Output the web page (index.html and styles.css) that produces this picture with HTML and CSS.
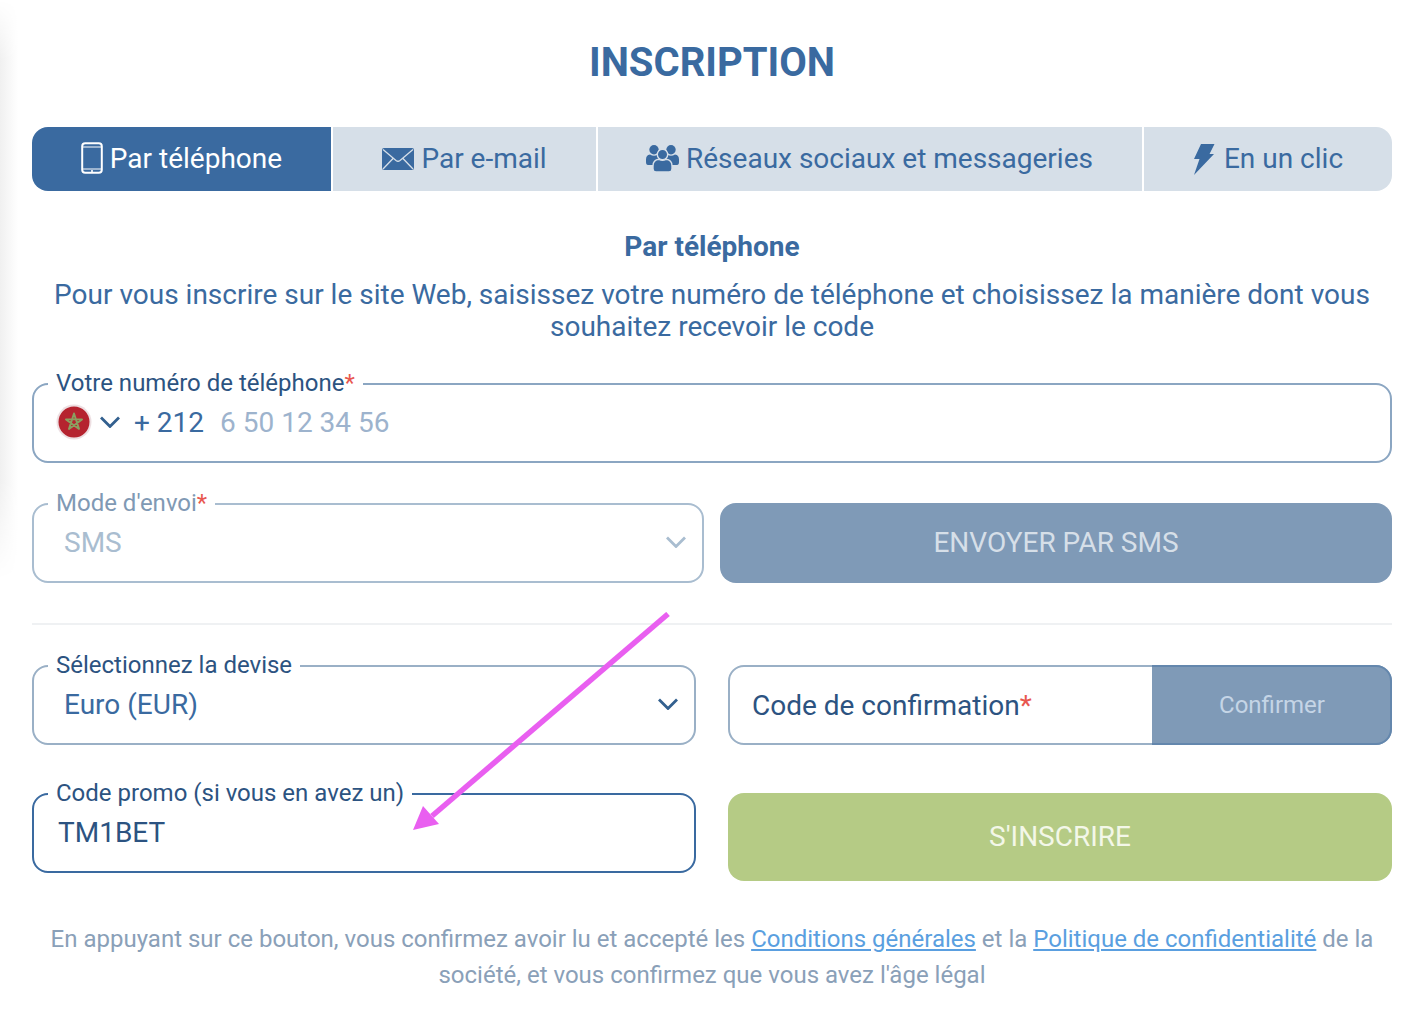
FILE: index.html
```html
<!DOCTYPE html>
<html lang="fr">
<head>
<meta charset="utf-8">
<title>Inscription</title>
<link rel="stylesheet" href="styles.css">
</head>
<body>
<div class="edge-shadow"></div>
<main class="page">
  <h1 class="title">INSCRIPTION</h1>
  <nav class="tabs">
    <a class="tab tab-phone active">
      <svg class="ico" width="22" height="32" viewBox="0 0 22 32"><rect x="1.2" y="1.2" width="19.6" height="29.6" rx="3" fill="none" stroke="currentColor" stroke-width="2"/><path d="M1 5h20M1 27h20" stroke="currentColor" stroke-width="1"/><circle cx="11" cy="29" r="1.1" fill="currentColor"/></svg>
      Par téléphone
    </a>
    <a class="tab tab-mail">
      <svg class="ico ico-mail" width="32" height="22" viewBox="0 0 32 22"><rect width="32" height="22" rx="2" fill="currentColor"/><path d="M1 1.500l13 11q2 1.500 4 0l13-11M1 21l10.500-11M31 21L20.500 10" fill="none" stroke="#d6dfe8" stroke-width="1.300"/></svg>
      Par e-mail
    </a>
    <a class="tab tab-social">
      <svg class="ico ico-social" width="33" height="27" viewBox="0 0 33 27"><g fill="currentColor"><circle cx="8" cy="4.800" r="4.700"/><circle cx="25" cy="4.800" r="4.700"/><path d="M0 17v-2.500q0-4.500 4-5 4 2.500 8 0 2.500.3 4 2L8 20H2q-2 0-2-3zM33 17v-2.500q0-4.500-4-5-4 2.500-8 0-2.500.3-4 2l8 8.500h6q2 0 2-3z"/><g stroke="#d6dfe8" stroke-width="1.400"><circle cx="16.500" cy="9.500" r="5.200"/><path d="M7 24v-3q0-6 6-6.700 3.500 2 7 0 6 .7 6 6.700v3q0 3-3 3H10q-3 0-3-3z"/></g></g></svg>
      Réseaux sociaux et messageries
    </a>
    <a class="tab tab-click">
      <svg class="ico ico-bolt" width="22" height="31" viewBox="-1 0 22 31"><path fill="currentColor" d="M7 0h13.500l-5 10h4.500L0 31l5.500-16H0z"/></svg>
      En un clic
    </a>
  </nav>

  <h2 class="subtitle">Par téléphone</h2>
  <p class="intro">Pour vous inscrire sur le site Web, saisissez votre numéro de téléphone et choisissez la manière dont vous souhaitez recevoir le code</p>

  <div class="field field-phone">
    <span class="field-label">Votre numéro de téléphone<em>*</em></span>
    <svg class="flag" width="36" height="36" viewBox="0 0 36 36"><circle cx="18" cy="18" r="17.500" fill="#eddfe2"/><circle cx="18" cy="18" r="15.500" fill="#b5232f"/><path d="M18 9.500l5 15.400-13-9.500h16l-13 9.500z" fill="none" stroke="#8aa060" stroke-width="1.900" stroke-linejoin="round"/></svg>
    <svg class="chev chev-phone" width="20" height="12" viewBox="0 0 20 12"><path d="M1 1.500l9 9 9-9" fill="none" stroke="#33608f" stroke-width="2.800"/></svg>
    <span class="dial">+ 212</span>
    <span class="placeholder">6 50 12 34 56</span>
  </div>

  <div class="row row-send">
    <div class="field field-muted">
      <span class="field-label">Mode d'envoi<em>*</em></span>
      <span class="value">SMS</span>
      <svg class="chev chev-end" width="20" height="12" viewBox="0 0 20 12"><path d="M1 1.500l9 9 9-9" fill="none" stroke="#a9bdd0" stroke-width="2.800"/></svg>
    </div>
    <button class="btn btn-send">ENVOYER PAR SMS</button>
  </div>

  <hr class="divider">

  <div class="row row-wide">
    <div class="field">
      <span class="field-label">Sélectionnez la devise</span>
      <span class="value value-dark">Euro (EUR)</span>
      <svg class="chev chev-end" width="20" height="12" viewBox="0 0 20 12"><path d="M1 1.500l9 9 9-9" fill="none" stroke="#33608f" stroke-width="2.800"/></svg>
    </div>
    <div class="confirm">
      <span class="confirm-label">Code de confirmation<em>*</em></span>
      <button class="confirm-btn">Confirmer</button>
    </div>
  </div>

  <div class="row row-wide row-submit">
    <div class="field field-strong">
      <span class="field-label">Code promo (si vous en avez un)</span>
      <span class="value value-promo">TM1BET</span>
    </div>
    <button class="btn btn-submit">S'INSCRIRE</button>
  </div>

  <p class="legal">En appuyant sur ce bouton, vous confirmez avoir lu et accepté les <a>Conditions générales</a> et la <a>Politique de confidentialité</a> de la société, et vous confirmez que vous avez l'âge légal</p>
</main>
<svg class="arrow" width="270" height="230" viewBox="0 0 270 230"><path d="M258 2L22 204" stroke="#e95ff0" stroke-width="5.500" fill="none"/><path d="M3 218L13 194 29 212z" fill="#e95ff0"/></svg>
</body>
</html>
```

FILE: styles.css
```css
* { box-sizing: border-box; }
html, body { margin: 0; padding: 0; background: #fff; }
body {
  position: relative;
  height: 1022px;
  overflow: hidden;
  font-family: Roboto, "Liberation Sans", sans-serif;
  color: #3a6aa0;
}
.edge-shadow {
  position: absolute;
  left: 0; top: 0;
  width: 18px; height: 580px;
  background: linear-gradient(to right, #f0f0f0, #fff);
  -webkit-mask-image: linear-gradient(to bottom, transparent 0, #000 60px, #000 480px, transparent 100%);
  mask-image: linear-gradient(to bottom, transparent 0, #000 60px, #000 480px, transparent 100%);
}
.page {
  position: relative;
  padding: 39px 26px 0 32px;
}
.title {
  margin: 0 0 41px;
  font-size: 40px;
  line-height: 47px;
  font-weight: 700;
  text-align: center;
  color: #3a6aa0;
}
.tabs {
  display: grid;
  grid-template-columns: 299px 263px 544px 248px;
  gap: 2px;
  height: 64px;
  border-radius: 16px;
  overflow: hidden;
}
.tab {
  display: flex;
  align-items: center;
  justify-content: center;
  gap: 7px;
  padding-bottom: 2px;
  background: #d6dfe8;
  color: #3a6aa0;
  font-size: 28px;
}
.tab.active { background: #3a6aa0; color: #fff; }
.tab-click { gap: 9px; }
.tab-social { gap: 7px; padding-right: 1px; }
.ico { flex: none; }
.ico-mail { margin-top: 1px; }
.ico-social { margin-top: 1px; }
.ico-bolt { margin-top: 3px; }
.subtitle {
  margin: 40px 0 16px;
  font-size: 28px;
  line-height: 32px;
  font-weight: 700;
  text-align: center;
}
.intro {
  margin: 0 0 40px;
  font-size: 28px;
  line-height: 32px;
  text-align: center;
}
.field {
  position: relative;
  display: flex;
  align-items: center;
  height: 80px;
  padding: 0 16px 2px 24px;
  border: 2px solid #9ab0c6;
  border-radius: 16px;
  background: #fff;
}
.field-phone { border-color: #8ba6c2; margin-bottom: 40px; }
.field-label {
  position: absolute;
  left: 14px;
  top: -16px;
  padding: 0 8px;
  background: #fff;
  font-size: 24px;
  line-height: 28px;
  color: #2c5381;
  white-space: nowrap;
}
.field-label em { font-style: normal; color: #e8574f; }
.flag { flex: none; margin: 0 0 0 -2px; }
.chev { flex: none; }
.chev-phone { margin-left: 8px; }
.dial { margin-left: 14px; font-size: 28px; color: #3a6aa0; }
.placeholder { margin-left: 16px; font-size: 28px; color: #9db3cd; }
.row { display: grid; }
.row-send { grid-template-columns: 672px 672px; gap: 16px; }
.row-wide { grid-template-columns: 664px 664px; gap: 32px; }
.field-muted { border-color: #a9bdd0; padding-left: 30px; }
.field-muted .field-label { color: #8099b4; }
.value { font-size: 28px; color: #a9bdd0; }
.value-dark { color: #3a6aa0; }
.value-promo { color: #2c5381; }
.chev-end { position: absolute; right: 16px; top: 31px; }
.row-wide .field { padding-left: 30px; }
.row-wide .field-strong { border-color: #3a6aa0; padding-left: 24px; }
.btn {
  border: 0;
  border-radius: 16px;
  padding: 0 0 2px;
  font-family: inherit;
  font-size: 28px;
  color: #d6dfe8;
}
.btn-send { background: #7f9ab7; height: 80px; }
.divider {
  height: 2px;
  margin: 40px 0 40px;
  border: 0;
  background: #eff1f3;
}
.confirm {
  display: flex;
  height: 80px;
  border: 2px solid #9ab0c6;
  border-radius: 16px;
}
.confirm-label {
  flex: 1;
  display: flex;
  align-items: center;
  padding-left: 22px;
  font-size: 28px;
  color: #2c5381;
}
.confirm-label em { font-style: normal; color: #e8574f; }
.confirm-btn {
  flex: none;
  width: 240px;
  margin: -2px;
  padding: 0 0 0 2px;
  border: 2px solid #6487ad;
  border-left: 0;
  border-radius: 0 16px 16px 0;
  background: #7f9ab7;
  font-family: inherit;
  font-size: 24px;
  color: #c5d5e6;
}
.row-submit { margin-top: 48px; align-items: start; }
.btn-submit { height: 88px; background: #b5cb85; color: #f3f7e8; }
.legal {
  margin: 40px 0 0;
  font-size: 24px;
  line-height: 36px;
  text-align: center;
  color: #8aa0b8;
}
.legal a { color: #5a9fe0; text-decoration: underline; }
.arrow {
  position: absolute;
  left: 410px;
  top: 612px;
}
```
